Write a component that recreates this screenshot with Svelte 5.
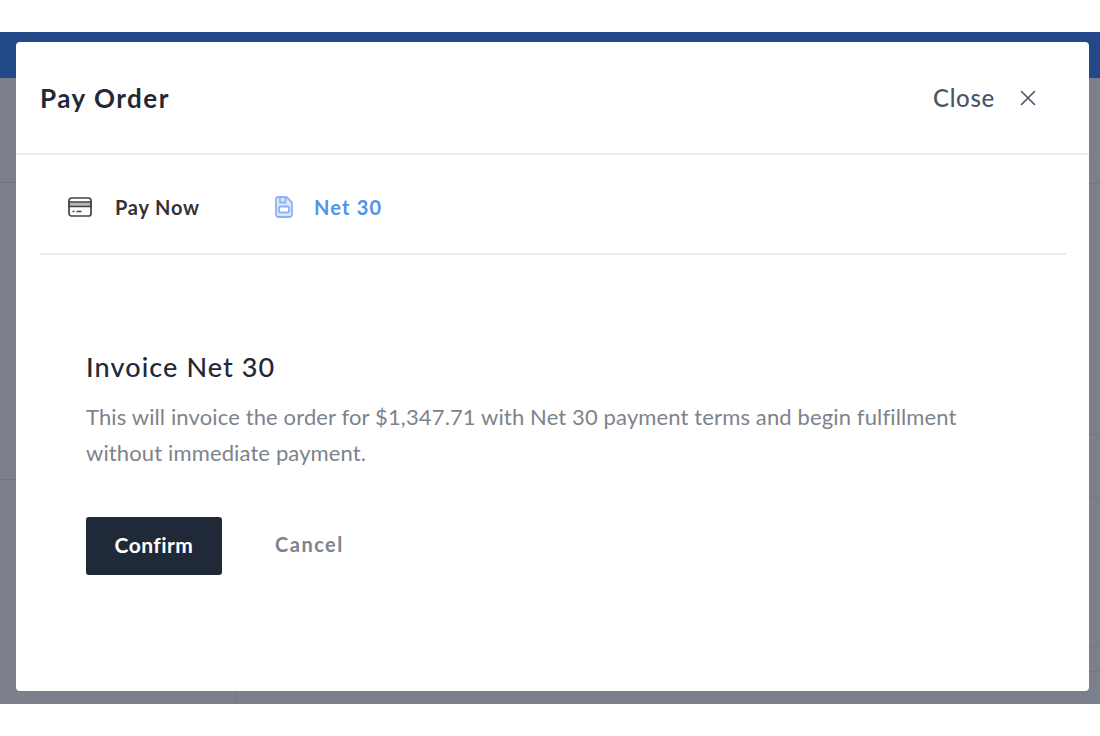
<script>
    let activeTab = 'net30';

    const leftRows = [105, 297];
    const rightRows = [106, 251, 63, 149, 25];
</script>

<div class="page">
    <div class="backdrop">
        <div class="topbar"></div>
        <div class="table">
            <div class="col left">
                {#each leftRows as h}
                    <div class="row" style="height: {h}px"></div>
                {/each}
            </div>
            <div class="col right">
                {#each rightRows as h}
                    <div class="row" style="height: {h}px"></div>
                {/each}
            </div>
        </div>

        <div class="modal">
            <header>
                <h2>Pay Order</h2>
                <button class="close">
                    <span>Close</span>
                    <svg width="18" height="18" viewBox="0 0 18 18" fill="none" stroke="#4b5563" stroke-width="1.600" stroke-linecap="round">
                        <path d="M2.500 2.500l13 13M15.500 2.500l-13 13" />
                    </svg>
                </button>
            </header>

            <nav>
                <button class="tab pay" class:active={activeTab === 'pay'} onclick={() => (activeTab = 'pay')}>
                    <svg width="24" height="20" viewBox="0 0 24 20" fill="none" stroke="#444" stroke-width="1.700">
                        <rect x="1" y="1" width="22" height="18" rx="2.500" />
                        <path d="M1 5h22v4.500H1z" fill="#b4b5b8" />
                        <path d="M4.500 14.500h2M8.500 14.500h5" />
                    </svg>
                    <span>Pay Now</span>
                </button>
                <button class="tab net" class:active={activeTab === 'net30'} onclick={() => (activeTab = 'net30')}>
                    <svg width="18" height="22" viewBox="0 0 18 22" fill="#dbe7fb" stroke="currentColor" stroke-width="1.800" stroke-linejoin="round">
                        <path d="M3 1h8.500L17 6.500v12a2.500 2.500 0 0 1-2.500 2.500h-11A2.500 2.500 0 0 1 1 18.500V3a2 2 0 0 1 2-2z" />
                        <path d="M5 1.500v5h5.500v-5" fill="none" />
                        <rect x="4" y="10.500" width="10" height="6" rx="1.500" fill="#fff" />
                    </svg>
                    <span>Net 30</span>
                </button>
            </nav>

            <section>
                <h3>Invoice Net 30</h3>
                <p>This will invoice the order for $1,347.71 with Net 30 payment terms and begin fulfillment without immediate payment.</p>
                <div class="actions">
                    <button class="confirm">Confirm</button>
                    <button class="cancel">Cancel</button>
                </div>
            </section>
        </div>
    </div>
</div>

<style>
    :global(body) {
        background: #fff;
        font-family: "Lato", "Open Sans", sans-serif;
    }
    .page {
        padding: 32px 0;
    }
    .backdrop {
        position: relative;
        height: 672px;
        background: #7c7f8c;
        overflow: hidden;
    }
    .topbar {
        height: 46px;
        background: #234888;
    }
    .table {
        display: flex;
        height: 626px;
    }
    .col {
        display: flex;
        flex-direction: column;
    }
    .left {
        width: 236px;
        flex: none;
        border-right: 1px solid #747783;
    }
    .right {
        flex: 1;
    }
    .row {
        box-sizing: border-box;
        flex: none;
        border-bottom: 1px solid #737682;
    }
    .modal {
        position: absolute;
        left: 16px;
        top: 10px;
        width: 1073px;
        height: 649px;
        background: #fff;
        border-radius: 4px;
    }
    button {
        background: none;
        border: none;
        padding: 0;
        font: inherit;
        cursor: pointer;
    }
    header {
        height: 113px;
        box-sizing: border-box;
        display: flex;
        align-items: center;
        justify-content: space-between;
        padding: 0 52px 0 24px;
        border-bottom: 2px solid #eceded;
    }
    h2 {
        margin: 0;
        font-size: 26px;
        font-weight: 700;
        letter-spacing: 1.500px;
        color: #1f2937;
    }
    .close {
        display: flex;
        align-items: center;
        gap: 24px;
        font-size: 24px;
        font-weight: 500;
        letter-spacing: 0.700px;
        color: #4b5563;
    }
    nav {
        height: 100px;
        box-sizing: border-box;
        margin: 0 23px 0 24px;
        padding: 6px 0 0 28px;
        display: flex;
        align-items: center;
        border-bottom: 2px solid #eceded;
    }
    .tab {
        display: flex;
        align-items: center;
        font-size: 20px;
        font-weight: 700;
        letter-spacing: 1.200px;
        color: #333;
    }
    .tab svg { flex: none; }
    .pay { gap: 23px; margin-right: 75px; letter-spacing: 0.800px; }
    .net { gap: 21px; }
    .tab.active { color: #4f94ea; }
    .net svg { color: #8fb2f0; }
    section {
        padding: 92px 70px 0;
    }
    h3 {
        margin: 0;
        font-size: 27px;
        line-height: 40px;
        font-weight: 500;
        letter-spacing: 1.100px;
        color: #1f2937;
    }
    p {
        margin: 12px 0 0;
        width: 890px;
        font-size: 22px;
        line-height: 36px;
        letter-spacing: 0.130px;
        color: #7d838c;
    }
    .actions {
        margin-top: 46px;
        display: flex;
        align-items: center;
    }
    .confirm {
        width: 136px;
        height: 58px;
        padding-bottom: 4px;
        background: #1f2937;
        border-radius: 3px;
        color: #fff;
        font-size: 21px;
        font-weight: 700;
        letter-spacing: 0.450px;
    }
    .cancel {
        margin-left: 53px;
        padding-bottom: 4px;
        font-size: 20px;
        font-weight: 700;
        letter-spacing: 1.500px;
        color: #7d838c;
    }
</style>
